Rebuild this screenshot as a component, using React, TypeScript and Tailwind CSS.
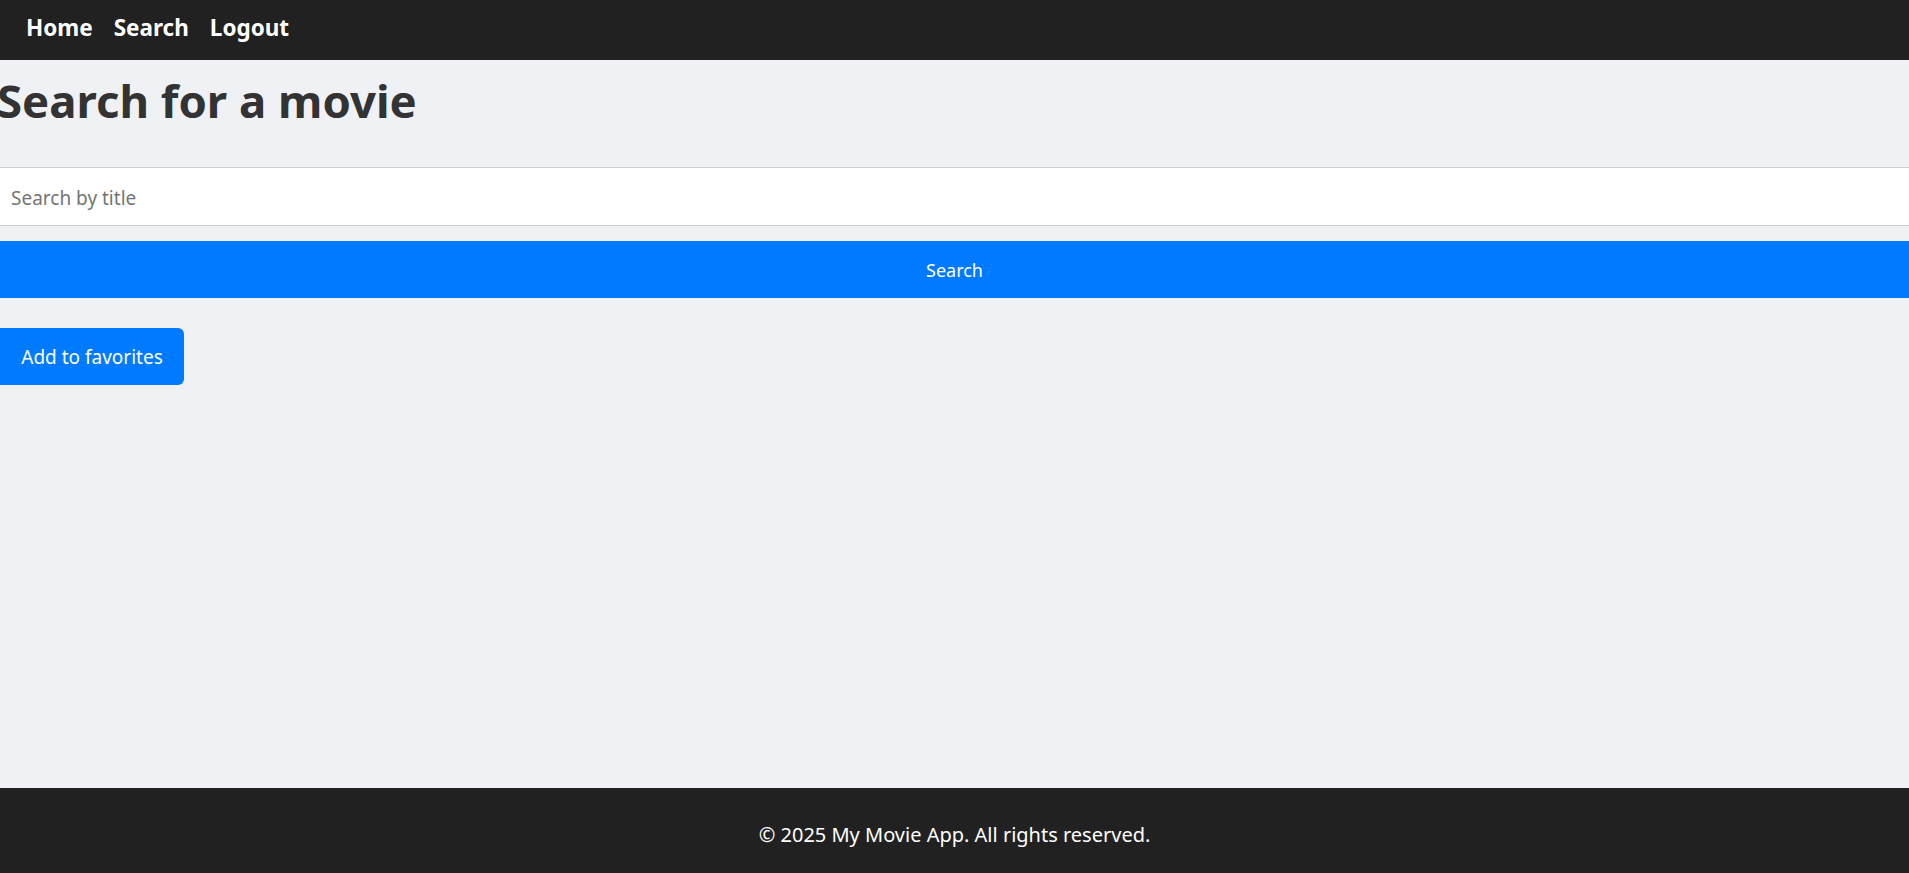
import React, { useState } from 'react';

export default function App() {
  const [query, setQuery] = useState('');

  return (
    <div className="min-h-screen flex flex-col bg-[#f0f1f5] text-[#333] overflow-hidden" style={{ fontFamily: '"Noto Sans", "Open Sans", sans-serif' }}>
      {/* Nav */}
      <nav className="h-[60px] bg-[#212121] flex items-center px-[26px] pb-[5px] gap-[21px]">
        <a href="#" className="text-white font-bold text-[22.5px]">Home</a>
        <a href="#" className="text-white font-bold text-[22.5px]">Search</a>
        <a href="#" className="text-white font-bold text-[22.5px]">Logout</a>
      </nav>

      {/* Main */}
      <main className="flex-1 flex flex-col">
        <h1 className="font-bold text-[45.5px] leading-none mt-[18px] -ml-[3px] text-[#333]">Search for a movie</h1>
        <input
          type="text"
          value={query}
          onChange={(e) => setQuery(e.target.value)}
          placeholder="Search by title"
          className="mt-[43px] h-[59px] bg-white border-y border-[#ccc] px-[11px] pt-[3px] text-[19px] placeholder:text-[#757575] outline-none"
        />
        <button className="mt-[15px] h-[57px] bg-[#007bff] text-white text-[18px] pt-[2px]">Search</button>
        <div>
          <button className="mt-[30px] h-[57px] w-[184px] bg-[#007bff] text-white text-[19px] pt-[2px] rounded-r-[6px]">Add to favorites</button>
        </div>
      </main>

      {/* Footer */}
      <footer className="h-[85px] bg-[#212121] flex items-center justify-center pt-[8px]">
        <p className="text-white text-[20px]">© 2025 My Movie App. All rights reserved.</p>
      </footer>
    </div>
  );
}
